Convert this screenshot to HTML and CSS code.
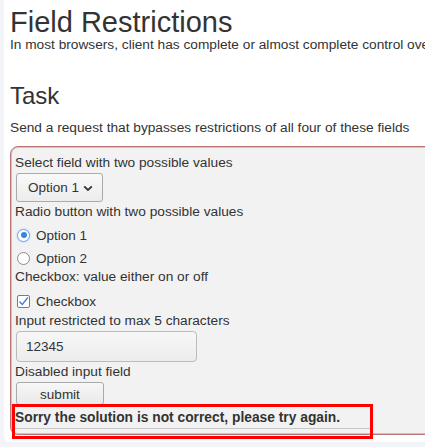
FILE: index.html
```html
<!DOCTYPE html>
<html>
<head>
<meta charset="utf-8">
<link rel="stylesheet" href="styles.css">
</head>
<body>
<div class="page">
  <h1 class="title">Field Restrictions</h1>
  <p class="text intro">In most browsers, client has complete or almost complete control over the appearance and behavior of form fields.</p>
  <h2 class="subtitle">Task</h2>
  <p class="text task">Send a request that bypasses restrictions of all four of these fields</p>
  <form class="form">
    <div class="label">Select field with two possible values</div>
    <div class="select">
      <span>Option 1</span>
      <svg class="chev" width="10" height="7" viewBox="0 0 10 7"><path d="M1.2 1.3 L5 5 L8.8 1.3" fill="none" stroke="#333" stroke-width="1.8"/></svg>
    </div>
    <div class="label l2">Radio button with two possible values</div>
    <label class="choice r1"><span class="radio checked"></span>Option 1</label>
    <label class="choice r2"><span class="radio"></span>Option 2</label>
    <div class="label l3">Checkbox: value either on or off</div>
    <label class="choice c1"><span class="check"><svg width="11" height="11" viewBox="0 0 11 11"><path d="M1.5 5.5 L4.3 8.5 L9.8 1.5" fill="none" stroke="#3b7fd6" stroke-width="1.3"/></svg></span>Checkbox</label>
    <div class="label l4">Input restricted to max 5 characters</div>
    <div class="input">12345</div>
    <div class="label l5">Disabled input field</div>
    <div class="submit">submit</div>
    <div class="message">Sorry the solution is not correct, please try again.</div>
    <div class="highlight"></div>
  </form>
</div>
</body>
</html>
```
FILE: styles.css
```css
html, body {
  margin: 0;
  padding: 0;
  background: #f3f4f8;
  overflow: hidden;
  height: 447px;
}
.page {
  position: relative;
  margin-left: 4px;
  width: 460px;
  height: 442px;
  background: #fff;
  border-bottom-left-radius: 6px;
  padding-left: 6px;
  box-sizing: border-box;
  font-family: "Liberation Sans", Arial, sans-serif;
  color: #333;
  overflow: hidden;
}
.title {
  margin: 0;
  padding-top: 5px;
  font-size: 29px;
  line-height: 34px;
  font-weight: normal;
  color: #333;
}
.text {
  margin: 0;
  font-size: 13.7px;
  line-height: 16px;
  white-space: nowrap;
  color: #333;
}
.intro {
  margin-top: -2px;
}
.subtitle {
  margin: 0;
  margin-top: 29px;
  font-size: 24px;
  line-height: 28px;
  font-weight: normal;
  color: #333;
}
.task {
  margin-top: 10px;
}
.form {
  position: relative;
  margin: 0;
  margin-top: 10px;
  width: 440px;
  background: #f2f2f2;
  border: 1px solid #b97474;
  box-shadow: inset 0 1px 0 #dcbcbc, inset 1px 0 0 #dcbcbc, inset 0 -1px 0 #dcbcbc;
  border-radius: 8px;
  padding: 8px 0 5px 4px;
  box-sizing: border-box;
  font-size: 13.7px;
}
.label {
  line-height: 16px;
  color: #333;
}
.select {
  display: flex;
  align-items: center;
  gap: 4px;
  margin-top: 2px;
  margin-left: 1px;
  width: 87px;
  height: 29px;
  box-sizing: border-box;
  border: 1px solid #aaa;
  border-radius: 3px;
  background: linear-gradient(#f9f9f9, #ececec);
  padding-left: 11px;
  font-size: 13.5px;
  color: #333;
}
.chev {
  margin-top: 1px;
}
.l2 { margin-top: 2px; }
.choice {
  display: flex;
  align-items: center;
  height: 22px;
  font-size: 13.5px;
  color: #333;
}
.r1 { margin-top: 4px; }
.r2 { margin-top: 1px; }
.radio {
  width: 13px;
  height: 13px;
  box-sizing: border-box;
  border: 1px solid #8a8a8a;
  border-radius: 50%;
  background: #fff;
  margin-left: 2px;
  margin-right: 6px;
  display: flex;
  align-items: center;
  justify-content: center;
}
.radio.checked {
  border-color: #7aa7dc;
  box-shadow: 0 0 2px #9cc2f0;
}
.radio.checked::after {
  content: "";
  width: 6px;
  height: 6px;
  border-radius: 50%;
  background: #3d84db;
}
.l3 { margin-top: 0; }
.c1 { margin-top: 5px; }
.check {
  width: 13px;
  height: 13px;
  box-sizing: border-box;
  border: 1px solid #7a7a7a;
  border-radius: 2px;
  background: #fff;
  margin-left: 2px;
  margin-right: 6px;
  display: flex;
  align-items: center;
  justify-content: center;
}
.l4 { margin-top: 1px; }
.input {
  margin-top: 2px;
  margin-left: 1px;
  width: 181px;
  height: 31px;
  box-sizing: border-box;
  border: 1px solid #bbb;
  border-radius: 4px;
  background: linear-gradient(#f7f7f7, #ececec);
  padding-left: 9px;
  line-height: 29px;
  font-size: 13.5px;
  color: #333;
}
.l5 { margin-top: 2px; }
.submit {
  margin-top: 2px;
  margin-left: 1px;
  width: 88px;
  height: 23px;
  box-sizing: border-box;
  border: 1px solid #aaa;
  border-radius: 3px;
  background: linear-gradient(#f7f7f7, #e9e9e9);
  text-align: center;
  line-height: 24px;
  font-size: 13.5px;
  color: #333;
}
.message {
  width: 356px;
  height: 24px;
  box-sizing: border-box;
  border-bottom: 1px solid #c8c8c8;
  font-weight: bold;
  font-size: 13.8px;
  line-height: 25px;
  color: #333;
}
.highlight {
  position: absolute;
  left: 1px;
  top: 257px;
  width: 361px;
  height: 35px;
  box-sizing: border-box;
  border: 3px solid #f00;
}
```
